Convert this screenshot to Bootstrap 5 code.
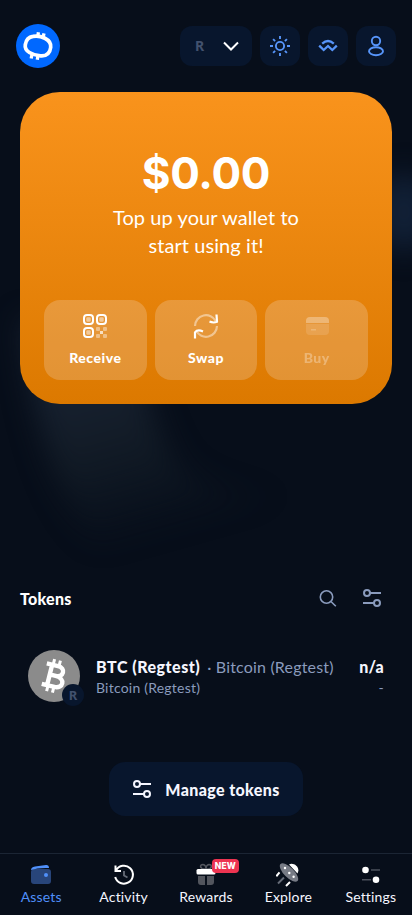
<!DOCTYPE html>
<html lang="en">
<head>
<meta charset="utf-8">
<meta name="viewport" content="width=device-width, initial-scale=1">
<title>Wallet</title>
<link href="https://cdn.jsdelivr.net/npm/bootstrap@5.3.0/dist/css/bootstrap.min.css" rel="stylesheet">
<style>
html, body { height: 100%; }
body { background: #070e1a; color: #f5f6ff; font-family: Lato, "Open Sans", sans-serif; overflow: hidden; }
svg { display: block; flex: none; }
.app-shell { height: 915px; position: relative; }
.glow { position: absolute; inset: 0; z-index: 0; }
.layer { position: relative; z-index: 1; }
.topbar { height: 92px; padding: 0 16px; }
.tool-btn { width: 40px; height: 40px; border: 0; border-radius: 12px; background: #08162d; color: #5795fa; padding: 0; }
.net-btn { width: 72px; color: #fff; padding: 0 12px; justify-content: space-between; }
.net-r { font: 700 14px/1 "Noto Sans", sans-serif; color: #42516e; margin-left: 3px; }
.balance { height: 312px; margin: 0 20px; border-radius: 40px; padding: 54px 24px 24px; background: linear-gradient(180deg, #f9931c, #dc7900); }
.amount { font: 700 44px/54px Inter, sans-serif; letter-spacing: -.3px; }
.hint { font-size: 20px; line-height: 28px; letter-spacing: .08px; margin-top: 3px; }
.act { height: 80px; border: 0; border-radius: 16px; background: rgba(245,246,255,.2); color: #fff; font-weight: 900; font-size: 14px; line-height: 20px; letter-spacing: .5px; padding: 12px 0 0; }
.act svg { margin-bottom: 8px; }
.act.dim > * { opacity: .3; }
.tokens-head { margin: 178px 30px 0 20px; height: 32px; color: #8a9bbd; }
.heading { font-weight: 900; font-size: 16px; color: #fff; letter-spacing: .25px; padding-top: 2px; }
.search-icon { margin-right: 25px; }
.token { margin: 36px 28px 0; height: 52px; }
.coin { position: relative; width: 52px; height: 52px; }
.coin-net { position: absolute; left: 34px; top: 34px; width: 22px; height: 22px; border-radius: 50%; background: #08162d; color: #42516e; font: 700 13px/22px "Noto Sans", sans-serif; text-align: center; }
.token-text { margin-left: 16px; line-height: 22px; padding-top: 6px; white-space: nowrap; }
.muted { color: #8a9bbd; }
.t1 { font-size: 16px; }
.t1 b { font-weight: 900; letter-spacing: .5px; }
.t1 b.value { letter-spacing: .2px; }
.t1 .muted { letter-spacing: .18px; margin-left: 7px; }
.t2 { font-size: 14px; line-height: 20px; letter-spacing: .22px; }
.manage { width: 194px; height: 54px; margin: 60px auto 0; border: 0; border-radius: 16px; background: #08162d; color: #f5f6ff; font-weight: 900; font-size: 16px; letter-spacing: .38px; gap: 13px; }
.manage span { padding-top: 2px; }
.tabs { position: absolute; left: 0; right: 0; bottom: 0; height: 62px; z-index: 2; border-top: 1px solid #1b2534; background: #070e1a; }
.tab { flex: 1 1 0; color: #f5f6ff; font-size: 14px; line-height: 20px; letter-spacing: .17px; padding-top: 9px; text-decoration: none; position: relative; }
.tab.current { color: #5090fa; }
.new-tag { position: absolute; left: 47px; top: 5px; width: 27px; height: 14px; border-radius: 4px; background: #ed3451; color: #fff; font: 800 8.5px/14px Inter, sans-serif; text-align: center; }
</style>
<script src="https://cdn.jsdelivr.net/npm/bootstrap@5.3.0/dist/js/bootstrap.bundle.min.js"></script>
</head>
<body>
<div class="app-shell">
  <svg class="glow" width="412" height="915" viewBox="0 0 412 915">
    <defs>
      <filter id="soft" x="-50%" y="-50%" width="200%" height="200%" color-interpolation-filters="sRGB"><feGaussianBlur stdDeviation="14"/></filter>
      <linearGradient id="fade" gradientUnits="userSpaceOnUse" x1="50" y1="390" x2="95" y2="550"><stop offset="0" stop-color="#172130"/><stop offset=".45" stop-color="#121b26"/><stop offset="1" stop-color="#111b26" stop-opacity="0"/></linearGradient>
    </defs>
    <path d="M22 320 L138 320 Q146 430 184 470 Q235 505 330 490 Q240 540 130 580 Q40 510 22 320Z" fill="url(#fade)" filter="url(#soft)"/>
    <ellipse cx="404" cy="212" rx="32" ry="38" fill="#112036" filter="url(#soft)"/>
  </svg>

  <header class="topbar layer d-flex align-items-center gap-2">
    <svg class="me-auto" width="44" height="44" viewBox="0 0 44 44"><circle cx="22" cy="22" r="22" fill="#0068ff"/><g fill="none" stroke="#fff"><path d="M17 12.4C24 11.1 35.7 15 34.7 23.4C33.8 30.6 29.2 32.2 24.4 31.8C16.4 31.1 8.1 27.5 9.3 20.6C10.2 15.2 12.6 13.1 17 12.4Z" stroke-width="3.7"/><path d="M21.7 13l.7-4.7M27 14l1-4.6M16 30.2l-.8 4.3M22 31l-.7 4.7" stroke-width="3.3"/></g></svg>
    <button class="tool-btn net-btn d-flex align-items-center"><span class="net-r">R</span><svg width="18" height="18" viewBox="0 0 18 18" fill="none" stroke="currentColor" stroke-width="2"><path d="M2 5.5l7 7 7-7"/></svg></button>
    <button class="tool-btn d-flex align-items-center justify-content-center"><svg width="20" height="20" viewBox="0 0 20 20" fill="none" stroke="currentColor" stroke-width="1.9"><circle cx="10" cy="10" r="4.1"/><path d="M10 0v3M10 17v3M0 10h3M17 10h3M3.1 3.1l2 2M14.9 14.9l2 2M3.1 16.9l2-2M14.9 5.1l2-2"/></svg></button>
    <button class="tool-btn d-flex align-items-center justify-content-center"><svg width="20" height="20" viewBox="0 0 20 20" fill="none" stroke="currentColor" stroke-width="2.3"><path d="M4.2 7.6Q10 2.4 15.8 7.6M1.2 9.6l4.5 4.4 4.3-4 4.3 4 4.5-4.4"/></svg></button>
    <button class="tool-btn d-flex align-items-center justify-content-center"><svg width="20" height="22" viewBox="0 0 20 22" fill="none" stroke="currentColor" stroke-width="1.9"><circle cx="10" cy="6" r="4.2"/><ellipse cx="10" cy="16.2" rx="7" ry="4"/></svg></button>
  </header>

  <section class="balance layer text-center d-flex flex-column text-white">
    <div class="amount">$0.00</div>
    <div class="hint">Top up your wallet to<br>start using it!</div>
    <div class="d-flex gap-2 mt-auto">
      <button class="act flex-fill w-100 d-flex flex-column align-items-center"><svg width="28" height="28" viewBox="0 0 28 28"><g fill="none" stroke="#fff" stroke-width="2"><rect x="3" y="3" width="9" height="9" rx="3"/><rect x="16" y="3" width="9" height="9" rx="3"/><rect x="3" y="16" width="9" height="9" rx="3"/></g><g fill="#fff" opacity=".5"><rect x="5.3" y="5.3" width="4.4" height="4.4" rx="1.2"/><rect x="18.3" y="5.3" width="4.4" height="4.4" rx="1.2"/><rect x="5.3" y="18.3" width="4.4" height="4.4" rx="1.2"/></g><g fill="#fff" opacity=".4"><rect x="15" y="15" width="4" height="4" rx="1"/><rect x="22" y="15" width="4" height="4" rx="1"/><rect x="15" y="22" width="4" height="4" rx="1"/><rect x="22" y="22" width="4" height="4" rx="1"/></g><rect x="19" y="19" width="3" height="3" fill="#fff" opacity=".7"/></svg><span>Receive</span></button>
      <button class="act flex-fill w-100 d-flex flex-column align-items-center"><svg width="28" height="28" viewBox="0 0 28 28" fill="none" stroke="#fff" stroke-width="2.2"><path d="M3 14A11 11 0 0 1 23.8 9.2M25 14A11 11 0 0 1 4.2 18.8" opacity=".45"/><path d="M24.5 2.5L25 9.8Q21.5 11.3 17.5 9.6M3 26.5v-6.2Q5.5 17 11 19.4" stroke-linejoin="round"/></svg><span>Swap</span></button>
      <button class="act dim flex-fill w-100 d-flex flex-column align-items-center"><svg width="28" height="28" viewBox="0 0 28 28" fill="#fff"><path d="M3 11V9q0-4 4-4h15q4 0 4 4v2z"/><path d="M3 12h23v7q0 4-4 4H7q-4 0-4-4z" opacity=".4"/><path d="M8 17h5v1.5H8z"/></svg><span>Buy</span></button>
    </div>
  </section>

  <div class="tokens-head layer d-flex align-items-center">
    <span class="heading me-auto">Tokens</span>
    <svg class="search-icon" width="18" height="18" viewBox="0 0 18 18" fill="none" stroke="currentColor" stroke-width="1.6"><circle cx="7.5" cy="8" r="6.2"/><path d="M12 12.5l4.8 4.8"/></svg>
    <svg width="20" height="20" viewBox="0 0 20 20" fill="none" stroke="currentColor" stroke-width="2"><circle cx="5" cy="5" r="3"/><circle cx="15" cy="15" r="3"/><path d="M8 5h11M1 15h11"/></svg>
  </div>

  <div class="token layer d-flex">
    <div class="coin"><svg width="52" height="52" viewBox="0 0 52 52"><circle cx="26" cy="26" r="26" fill="#8b8b8b"/><g transform="rotate(14 26 26)" fill="none" stroke="#fff"><path d="M16 15.5H27.5C36 15.5 36 25.5 27.5 25.5H21.5M27.5 25.5C38.5 25.5 38 36.5 29 36.5H16M21.5 15.5V36.5" stroke-width="4.4"/><path d="M22.5 9.5v6M28.5 9.5v6M22.5 36.5v6M28.5 36.5v6" stroke-width="3"/></g></svg><span class="coin-net">R</span></div>
    <div class="token-text"><div class="t1"><b>BTC (Regtest)</b><span class="muted">· Bitcoin (Regtest)</span></div><div class="t2 muted">Bitcoin (Regtest)</div></div>
    <div class="token-text ms-auto text-end"><div class="t1"><b class="value">n/a</b></div><div class="t2 muted">-</div></div>
  </div>

  <button class="manage layer d-flex align-items-center justify-content-center"><svg width="20" height="20" viewBox="0 0 20 20" fill="none" stroke="currentColor" stroke-width="2"><circle cx="5" cy="5" r="3"/><circle cx="15" cy="15" r="3"/><path d="M8 5h11M1 15h11"/></svg><span>Manage tokens</span></button>

  <nav class="tabs d-flex">
    <a class="tab current d-flex flex-column align-items-center"><svg width="24" height="24" viewBox="0 0 24 24"><rect x="2" y="6" width="20" height="15" rx="3" fill="#28457a"/><path d="M2 7Q2 4 6 3.4L17 2Q20 1.8 20 5Q9 4.5 2 7Z" fill="#5090fa"/><circle cx="17" cy="12" r="2" fill="#5090fa"/></svg>Assets</a>
    <a class="tab d-flex flex-column align-items-center"><svg width="24" height="24" viewBox="0 0 24 24" fill="none" stroke="#fff" stroke-width="2"><path d="M4 7.4A9 9 0 1 1 3.2 14M3.5 2.5V8H9"/><path d="M12 8v4.5l3.5 2" stroke="#666c78" stroke-width="1.8"/></svg>Activity</a>
    <a class="tab d-flex flex-column align-items-center"><svg width="24" height="24" viewBox="0 0 24 24"><path d="M4 13h7v9H7q-3 0-3-3zM13 13h7v6q0 3-3 3h-4z" fill="#52555d"/><path d="M12 6C6 7 5 1.5 9 1.5Q12 2 12 6ZM12 6C18 7 19 1.5 15 1.5Q12 2 12 6Z" fill="none" stroke="#52555d" stroke-width="1.6"/><rect x="2.5" y="6" width="19" height="5.5" rx="1.5" fill="#fff"/></svg>Rewards<span class="new-tag">NEW</span></a>
    <a class="tab d-flex flex-column align-items-center"><svg width="24" height="24" viewBox="0 0 24 24"><path d="M13 1.5C17-1.5 25 4 21.5 10.5Z" fill="#fff"/><ellipse cx="13" cy="9.5" rx="12" ry="5" transform="rotate(45 13 9.5)" fill="#777b85"/><g fill="#fff"><circle cx="9" cy="5" r="1.2"/><circle cx="13.3" cy="10" r="1.2"/><circle cx="17.6" cy="13.7" r="1.2"/></g><path d="M.3 13.3l3.2-4M10 23l4-4" stroke="#fff" stroke-width="2"/><path d="M2 20.5l6-6" stroke="#666c78" stroke-width="2"/></svg>Explore</a>
    <a class="tab d-flex flex-column align-items-center"><svg width="24" height="24" viewBox="0 0 24 24"><path d="M12 7h9M3 16.7h9" stroke="#4c515c" stroke-width="1.6"/><circle cx="6.5" cy="7" r="3.3" fill="#fff"/><circle cx="17" cy="16.7" r="3.3" fill="#fff"/></svg>Settings</a>
  </nav>
</div>
</body>
</html>
